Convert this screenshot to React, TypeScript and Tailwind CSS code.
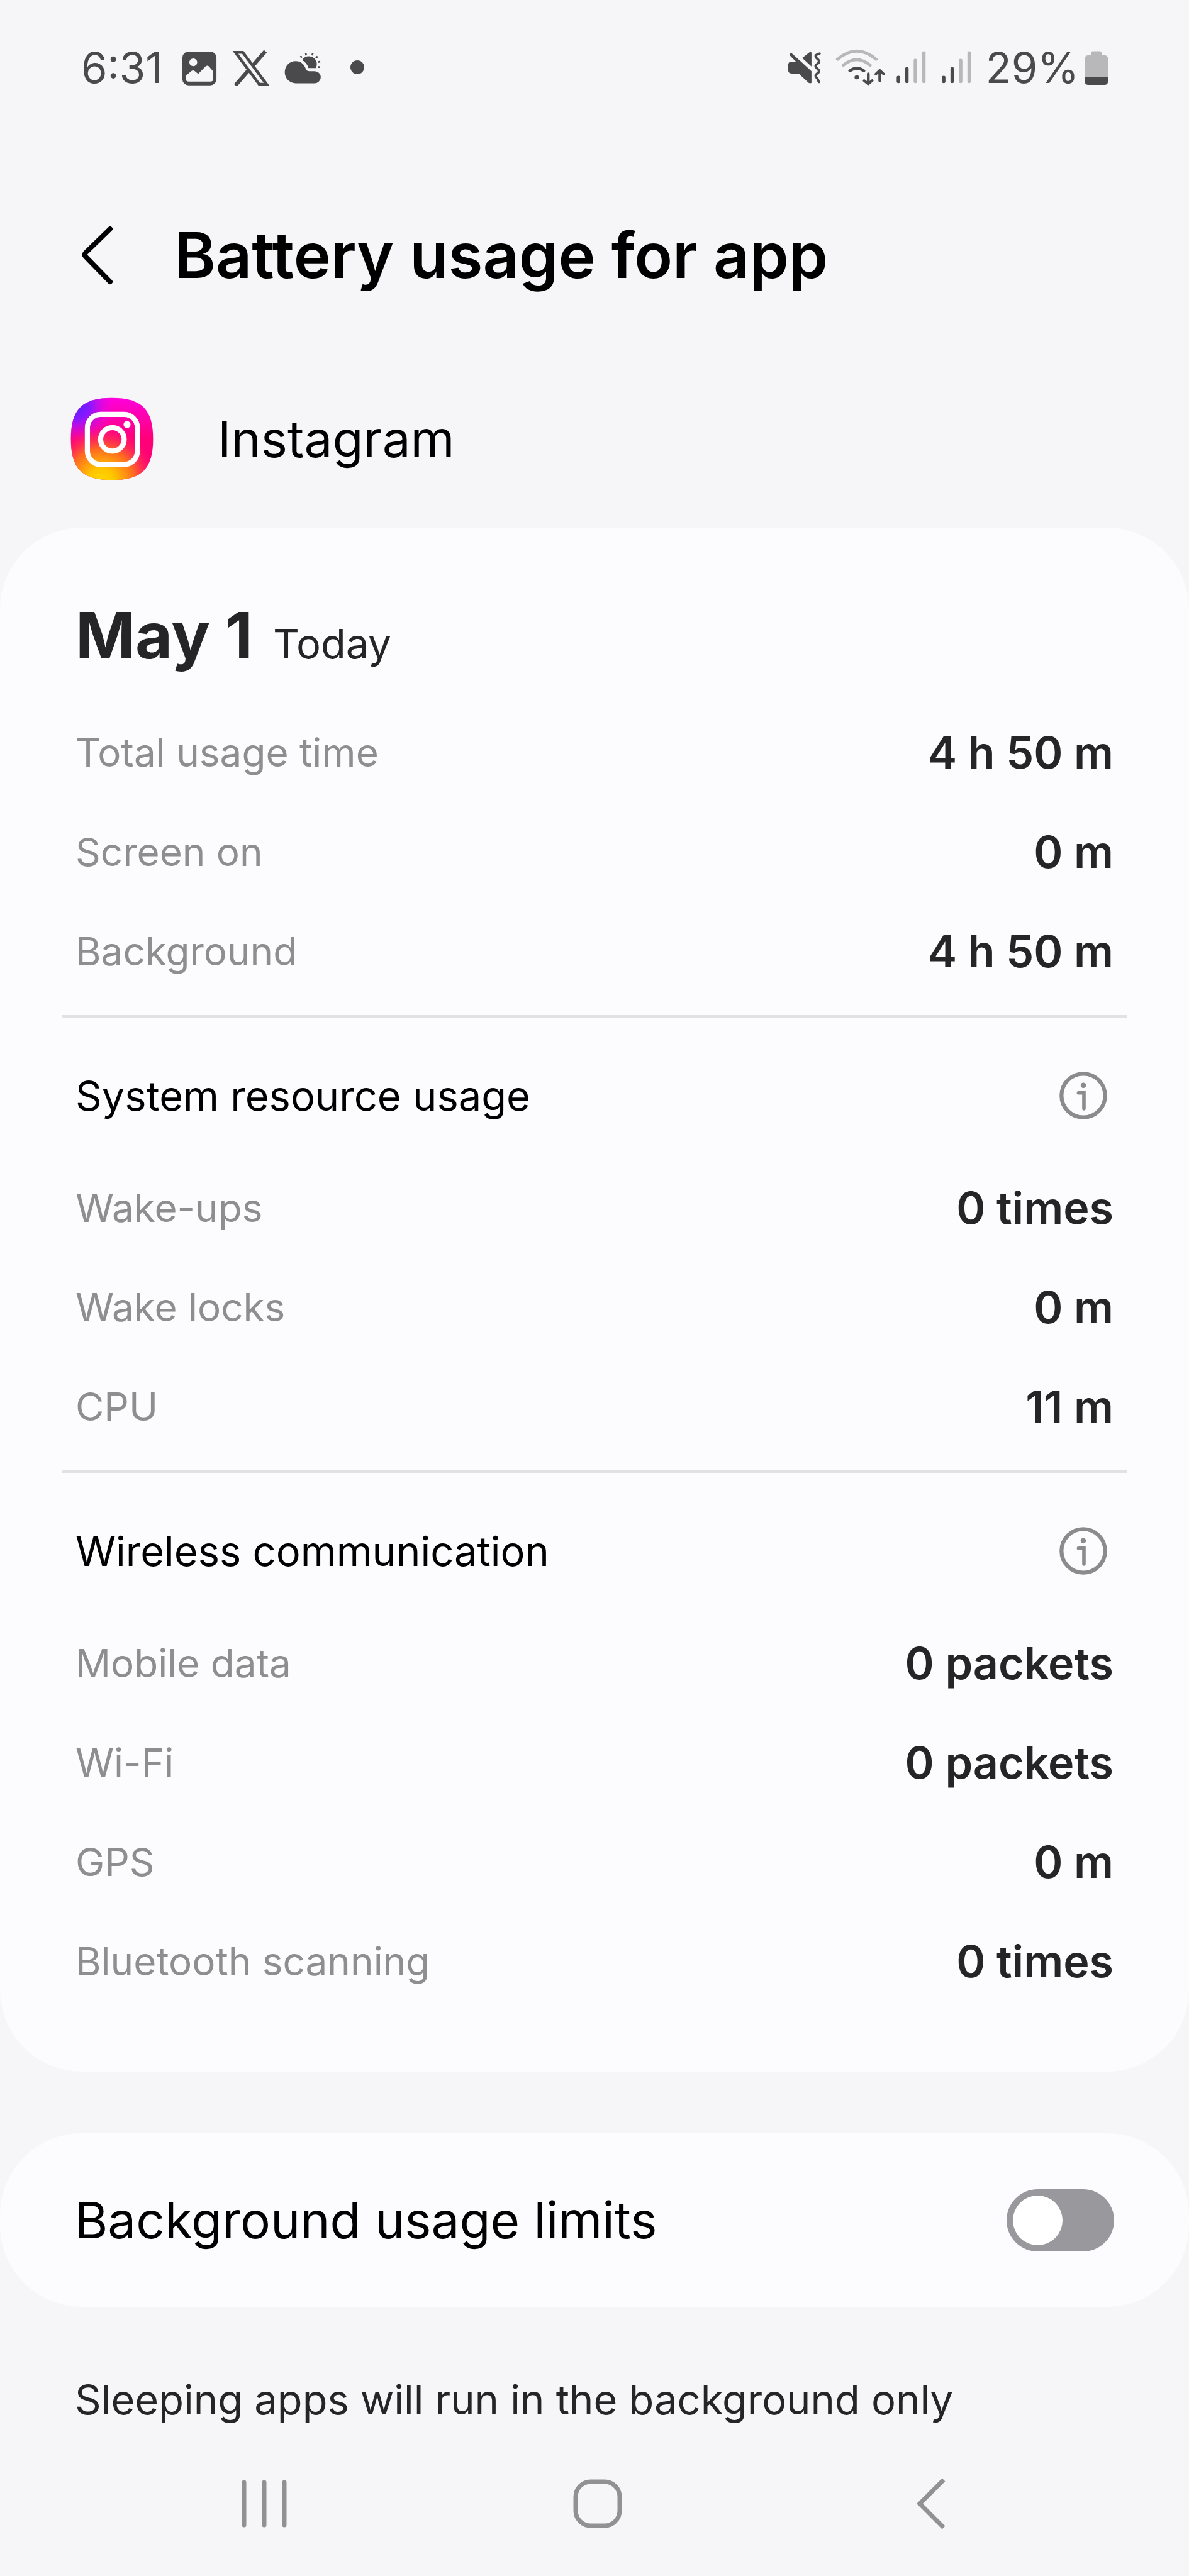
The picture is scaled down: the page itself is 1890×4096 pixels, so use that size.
import { useState } from "react";

type Row = { label: string; value: string };

const todayRows: Row[] = [
  { label: "Total usage time", value: "4 h 50 m" },
  { label: "Screen on", value: "0 m" },
  { label: "Background", value: "4 h 50 m" },
];

const systemRows: Row[] = [
  { label: "Wake-ups", value: "0 times" },
  { label: "Wake locks", value: "0 m" },
  { label: "CPU", value: "11 m" },
];

const wirelessRows: Row[] = [
  { label: "Mobile data", value: "0 packets" },
  { label: "Wi-Fi", value: "0 packets" },
  { label: "GPS", value: "0 m" },
  { label: "Bluetooth scanning", value: "0 times" },
];

const SignalIcon = () => (
  <svg viewBox="551 80 140 184" preserveAspectRatio="none" className="h-[60px] w-[51px]" strokeWidth="15" strokeLinecap="round">
    <path d="M565 221v21M602 179v63" stroke="#4a4a4c" />
    <path d="M639 138v104M676 101v141" stroke="#b8b8ba" />
  </svg>
);

const StatusBar = () => (
  <div className="flex h-[214px] items-center justify-between pl-[129px] pr-[127px] text-[#4a4a4c]">
    <div className="flex items-center">
      <span className="text-[67px]">6:31</span>
      {/* gallery */}
      <svg viewBox="580 80 176 184" className="ml-[29px] h-[60px] w-[58px]">
        <rect x="585" y="95" width="166" height="165" rx="30" fill="#4a4a4c" />
        <circle cx="638" cy="148" r="19" fill="#f6f6f8" />
        <path d="M602 213l28-23q7-5 14 0l18 14 37-37q7-6 14 0l17 19q5 5 5 12v30q0 14-14 14H616q-14 0-14-14z" fill="#f6f6f8" />
      </svg>
      {/* x */}
      <svg viewBox="824 80 188 184" className="ml-[22px] h-[60px] w-[62px]" fill="none" stroke="#4a4a4c">
        <path d="M988 94L928 163M905 188L842 260" strokeWidth="19" />
        <path d="M842 99H878L994 255H958Z" strokeWidth="14" />
      </svg>
      {/* weather */}
      <svg viewBox="1074 80 188 184" className="ml-[20px] h-[60px] w-[62px]" fill="#4a4a4c">
        <path d="M1134 250a53 54 0 1 1 0-108c30 0 43 20 49 36 5 11 10 13 22 13h22a29 29 0 0 1 0 59z" />
        <path d="M1166 137a36 36 0 0 1 66 39H1197q-7-24-31-39z" />
        <path d="M1158 117l6 8M1183 103l3 11M1218 103l-4 11M1241 119l-8 8M1254 144l-11 3M1254 171h-11" stroke="#4a4a4c" strokeWidth="8" />
      </svg>
      <span className="ml-[45px] size-[22px] rounded-full bg-[#4a4a4c]" />
    </div>

    <div className="flex items-center gap-[21px]">
      {/* mute / vibrate */}
      <svg viewBox="80 80 150 184" preserveAspectRatio="none" className="h-[60px] w-[55px]" fill="#4a4a4c">
        <path d="M99 145h20L91 113q-2-10 8-11L186 191v57q-5 5-12 0L131 203H103q-18 0-18-18v-24q0-16 14-16z" />
        <path d="M146 127L177 99q5-3 9 1v68z" />
        <path d="M221 105C208 108 201 115 206 124C210 132 220 134 219 145C218 154 205 157 204 166C203 176 218 180 219 190C220 199 205 203 204 212C203 221 212 225 214 232C215 237 217 241 219 244" fill="none" stroke="#4a4a4c" strokeWidth="11" strokeLinecap="round" />
      </svg>
      <div className="flex items-center gap-[14px]">
        <svg viewBox="290 80 225 184" preserveAspectRatio="none" className="h-[60px] w-[82px]" fill="none" strokeWidth="14" strokeLinecap="round">
          <path d="M302 133q84-80 168 0M327 162q58-54 117 0" stroke="#b8b8ba" />
          <path d="M356 189q30-24 60 0" stroke="#4a4a4c" />
          <circle cx="386" cy="221" r="10" fill="#4a4a4c" />
          <path d="M436 203v49M418 237l18 16 17-16M486 238V189M469 205l17-18 17 18" stroke="#4a4a4c" strokeWidth="12" strokeLinejoin="round" />
        </svg>
        <SignalIcon />
      </div>
      <SignalIcon />
      <div className="flex items-center gap-2">
        <span className="text-[67px]">29%</span>
        <svg viewBox="1378 80 110 184" preserveAspectRatio="none" className="h-[60px] w-[40px]">
          <path d="M1409 102q0-8 8-8h30q8 0 8 8v12h12q16 0 16 16v90h-101v-90q0-16 16-16h11z" fill="#b8b8ba" />
          <path d="M1382 219h101v21q0 18-16 18h-69q-16 0-16-18z" fill="#4a4a4c" />
        </svg>
      </div>
    </div>
  </div>
);

const InstagramIcon = () => (
  <svg viewBox="40 40 402 402" className="size-[132px]">
    <defs>
      <linearGradient id="ig-base" x1="0" y1="0" x2="0" y2="1">
        <stop offset="0" stopColor="#ff00dc" />
        <stop offset="0.5" stopColor="#ff0078" />
        <stop offset="1" stopColor="#ff0078" />
      </linearGradient>
      <radialGradient id="ig-purple" gradientUnits="userSpaceOnUse" cx="70" cy="80" r="190">
        <stop offset="0" stopColor="#5a20ff" />
        <stop offset="0.35" stopColor="#8a18ff" />
        <stop offset="1" stopColor="#ff00dc" stopOpacity="0" />
      </radialGradient>
      <radialGradient id="ig-yellow" gradientUnits="userSpaceOnUse" cx="190" cy="450" r="270">
        <stop offset="0" stopColor="#ffdc00" />
        <stop offset="0.25" stopColor="#ffc400" />
        <stop offset="0.6" stopColor="#ff6a20" />
        <stop offset="1" stopColor="#ff2060" stopOpacity="0" />
      </radialGradient>
    </defs>
    <path d="M241 42C385 42 440 97 440 241S385 440 241 440 42 385 42 241 97 42 241 42z" fill="url(#ig-base)" />
    <path d="M241 42C385 42 440 97 440 241S385 440 241 440 42 385 42 241 97 42 241 42z" fill="url(#ig-purple)" />
    <path d="M241 42C385 42 440 97 440 241S385 440 241 440 42 385 42 241 97 42 241 42z" fill="url(#ig-yellow)" />
    <rect x="122" y="122" width="242" height="242" rx="64" fill="none" stroke="#fff" strokeWidth="25" />
    <circle cx="243" cy="243" r="57" fill="none" stroke="#fff" strokeWidth="25" />
    <circle cx="314" cy="171" r="17" fill="#fff" />
  </svg>
);

const InfoIcon = () => (
  <svg viewBox="64 86 230 230" className="size-[76px]" fill="none" stroke="#8b8b8d">
    <circle cx="179" cy="201" r="105" strokeWidth="19" />
    <circle cx="179" cy="152" r="13" fill="#8b8b8d" stroke="none" />
    <path d="M156 188H182V264" strokeWidth="17" strokeLinecap="round" />
  </svg>
);

const UsageRows = ({ rows }: { rows: Row[] }) => (
  <dl>
    {rows.map((row) => (
      <div key={row.label} className="flex h-[158px] items-center justify-between px-[22px]">
        <dt className="text-[62px] text-[#8e8e90]">{row.label}</dt>
        <dd className="text-[70px] font-semibold text-[#252527]">{row.value}</dd>
      </div>
    ))}
  </dl>
);

const Section = ({ title, rows }: { title: string; rows: Row[] }) => (
  <section className="mt-[22px] border-t-4 border-[#e2e2e4] pt-6">
    <div className="flex h-[200px] items-center justify-between pl-[22px] pr-[32px]">
      <h2 className="text-[65px] text-black">{title}</h2>
      <button type="button" aria-label={"About " + title}>
        <InfoIcon />
      </button>
    </div>
    <UsageRows rows={rows} />
  </section>
);

const App = () => {
  const [limited, setLimited] = useState(false);

  return (
    <div className="min-h-screen bg-[#f6f6f8] font-['Inter','Liberation_Sans',sans-serif] leading-none">
      <StatusBar />

      <header className="flex h-[384px] items-center pl-[127px]">
        <button type="button" aria-label="Back">
          <svg viewBox="0 0 56 96" className="h-[96px] w-[56px]" fill="none" stroke="#000" strokeWidth="8" strokeLinecap="round" strokeLinejoin="round">
            <path d="M48 6L9 44q-3 3 0 6L48 90" />
          </svg>
        </button>
        <h1 className="ml-[94px] text-[100px] font-semibold text-black">Battery usage for app</h1>
      </header>

      <div className="mb-[41px] flex h-[200px] items-center gap-[102px] pl-[112px]">
        <InstagramIcon />
        <span className="text-[80px] text-black">Instagram</span>
      </div>

      <main>
        <div className="rounded-[130px] bg-[#fcfcfe] px-[98px] pb-24 pt-[111px]">
          <div className="mb-[34px] flex items-baseline gap-8 px-[22px] leading-[120px] text-[#252527]">
            <h2 className="text-[102px] font-bold">May 1</h2>
            <span className="text-[65px]">Today</span>
          </div>
          <UsageRows rows={todayRows} />
          <Section title="System resource usage" rows={systemRows} />
          <Section title="Wireless communication" rows={wirelessRows} />
        </div>

        <div className="mt-[98px] flex h-[276px] items-center justify-between rounded-[130px] bg-[#fcfcfe] px-[119px]">
          <label htmlFor="limits" className="text-[80px] text-black">
            Background usage limits
          </label>
          <input
            id="limits"
            type="checkbox"
            role="switch"
            checked={limited}
            onChange={(e) => setLimited(e.target.checked)}
            className="flex h-[99px] w-[171px] appearance-none items-center rounded-full bg-[#99989d] px-[10px] before:size-[79px] before:rounded-full before:bg-white checked:justify-end checked:bg-[#3478f6]"
          />
        </div>

        <p className="mt-[100px] px-[119px] text-[65px] leading-[96px] text-[#252527]">
          Sleeping apps will run in the background only
        </p>
      </main>

      <nav className="grid h-[234px] grid-cols-3 items-center justify-items-center pl-[155px] pr-[145px]">
        <button type="button" aria-label="Recent apps">
          <svg viewBox="0 0 72 76" className="h-[76px] w-[72px]" stroke="#919193" strokeWidth="7" strokeLinecap="round">
            <path d="M4 4v68M36 4v68M68 4v68" />
          </svg>
        </button>
        <button type="button" aria-label="Home">
          <svg viewBox="0 0 78 78" className="size-[78px]" fill="none" stroke="#919193" strokeWidth="7">
            <rect x="4" y="4" width="70" height="70" rx="24" />
          </svg>
        </button>
        <button type="button" aria-label="Back">
          <svg viewBox="0 0 46 82" className="h-[82px] w-[46px]" fill="none" stroke="#919193" strokeWidth="7">
            <path d="M43 3L5 41L43 79" />
          </svg>
        </button>
      </nav>
    </div>
  );
};

export default App;
